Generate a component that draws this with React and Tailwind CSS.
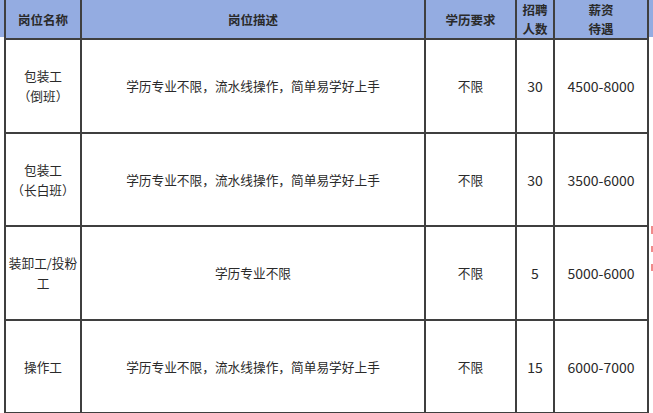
const jobs = [
	{ name: ["包装工", "（倒班）"], desc: "学历专业不限，流水线操作，简单易学好上手", edu: "不限", count: "30", pay: "4500-8000", h: "h-[94px]" },
	{ name: ["包装工", "（长白班）"], desc: "学历专业不限，流水线操作，简单易学好上手", edu: "不限", count: "30", pay: "3500-6000", h: "h-[93px]" },
	{ name: ["装卸工/投粉", "工"], desc: "学历专业不限", edu: "不限", count: "5", pay: "5000-6000", h: "h-[94px]" },
	{ name: ["操作工"], desc: "学历专业不限，流水线操作，简单易学好上手", edu: "不限", count: "15", pay: "6000-7000", h: "h-[93px]" },
];

const cell = "border-2 border-[#3f3f3f] text-center align-middle p-0";

export default function App() {
	return (
		<div className="w-[653px] h-[413px] overflow-hidden bg-white flex font-['Noto_Sans_CJK_SC',sans-serif] text-[#2a2a2a]">
			<div className="w-[4px] shrink-0">
				<div className="h-[37px] bg-[#94ace1]" />
			</div>
			<table className="table-fixed border-collapse w-[645px] shrink-0">
				<colgroup>
					<col className="w-[76px]" />
					<col className="w-[344px]" />
					<col className="w-[91px]" />
					<col className="w-[38px]" />
					<col className="w-[94px]" />
				</colgroup>
				<thead>
					<tr className="h-[37px] bg-[#94ace1] text-[12.5px] font-semibold leading-[19px]">
						<th className={`${cell} border-t-0`}>岗位名称</th>
						<th className={`${cell} border-t-0`}>岗位描述</th>
						<th className={`${cell} border-t-0`}>学历要求</th>
						<th className={`${cell} border-t-0`}>招聘<br />人数</th>
						<th className={`${cell} border-t-0`}>薪资<br />待遇</th>
					</tr>
				</thead>
				<tbody className="text-[12.7px] leading-[20px]">
					{jobs.map((job, i) => (
						<tr key={i} className={job.h}>
							<td className={cell}>
								{job.name.map((line, j) => (
									<div key={j}>{line}</div>
								))}
							</td>
							<td className={cell}>{job.desc}</td>
							<td className={cell}>{job.edu}</td>
							<td className={`${cell} text-[14px]`}>{job.count}</td>
							<td className={`${cell} text-[14px]`}>{job.pay}</td>
						</tr>
					))}
				</tbody>
			</table>
			<div className="flex-1 overflow-hidden">
				<div className="h-[37px] bg-[#94ace1]" />
				{/* clipped red note at the edge */}
				<div className="mt-[189px] pl-[2px] flex flex-col gap-[12px]">
					<div className="w-[2px] h-[8px] bg-[#f08a8a]" />
					<div className="w-[2px] h-[6px] bg-[#f08a8a]" />
					<div className="w-[2px] h-[7px] bg-[#f08a8a]" />
				</div>
			</div>
		</div>
	);
}
